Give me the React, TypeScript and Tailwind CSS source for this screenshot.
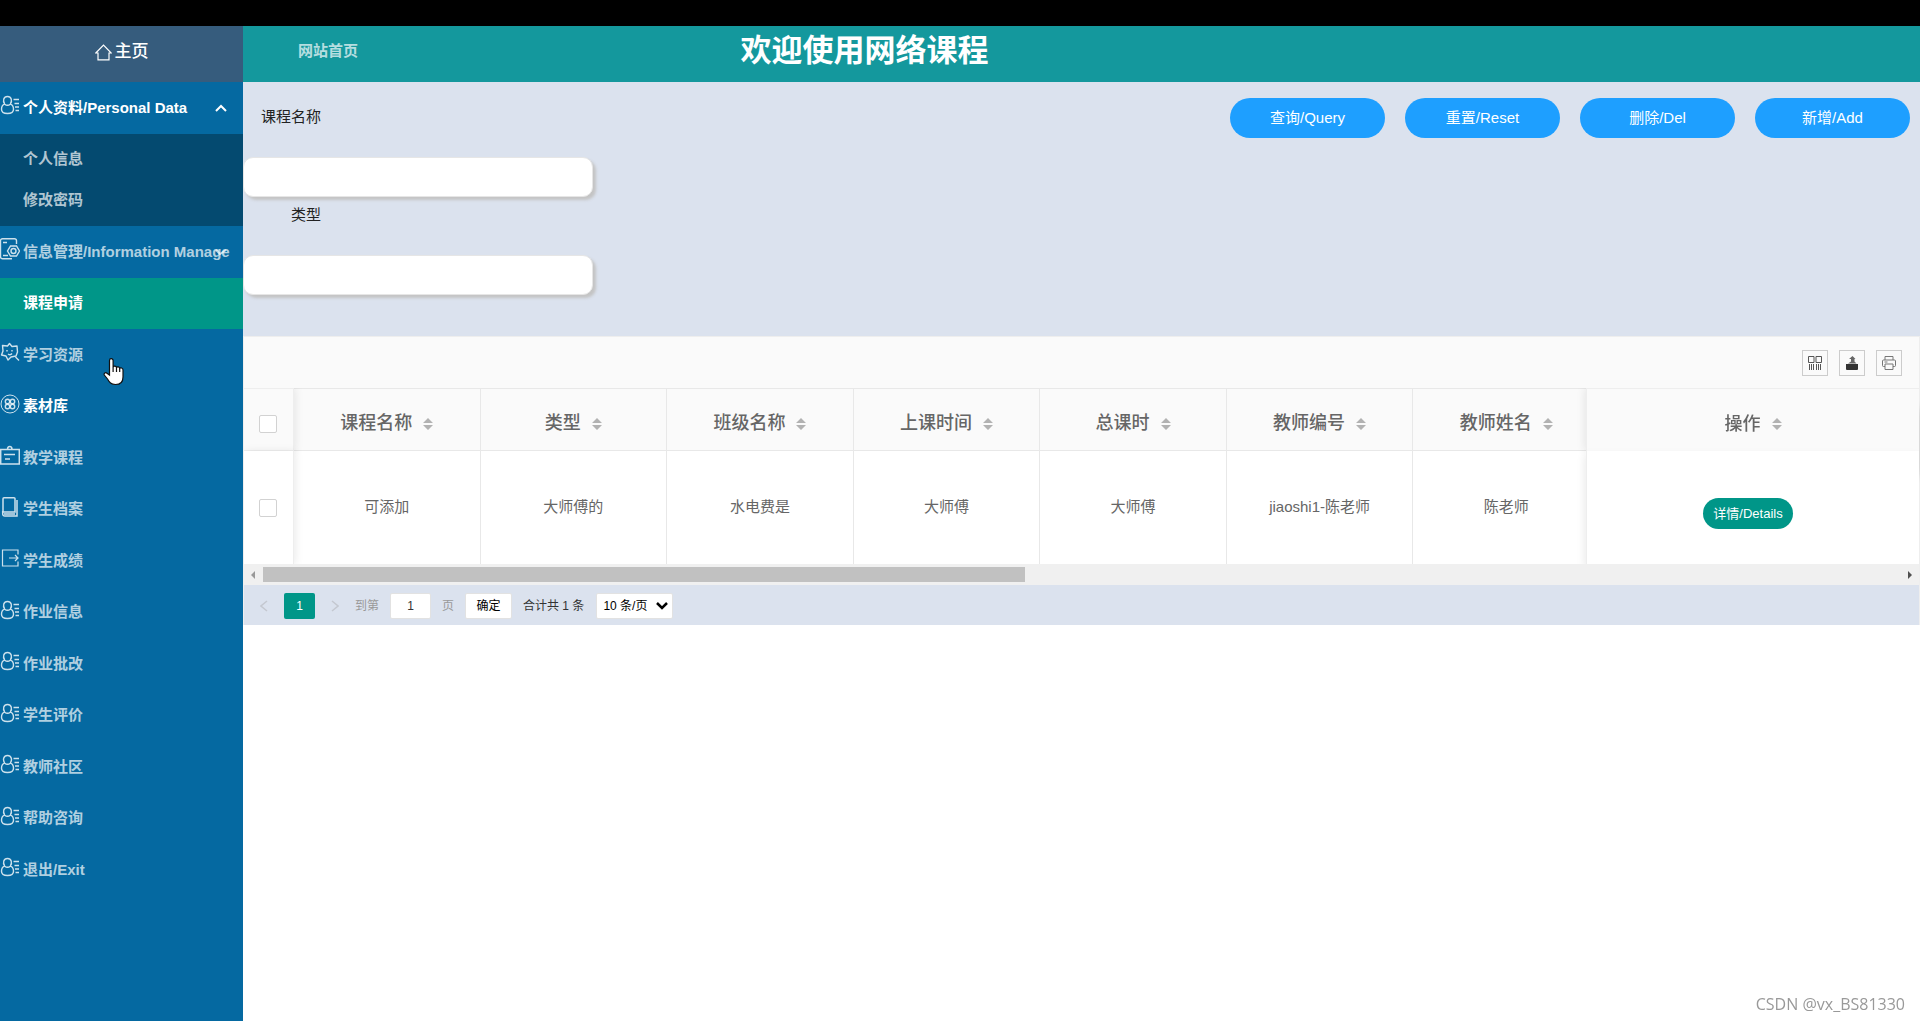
import type { ReactNode } from "react";

type IconProps = { children: ReactNode };

const Icon = ({ children }: IconProps) => (
  <svg width="20" height="20" viewBox="0 0 20 20" fill="none" stroke="currentColor" strokeWidth="1.4" className="shrink-0">
    {children}
  </svg>
);

const UserIcon = () => (
  <Icon>
    <path d="M4.7 9.2C2.4 5.6 3.6 1.5 7.5 1.5s5.1 4.1 2.8 7.7M4.7 9.2C2.3 10 1.5 11.8 1.5 14.2c0 3 1.5 4.3 6 4.3s6-1.300 6-4.300c0-2.400-.8-4.200-3.200-5M4.700 9.200c1.600 1.300 4 1.300 5.600 0" />
    <path d="M13.5 4.500H19M14.500 8.500H19M15 12H19M15.500 15.500H19" />
  </Icon>
);

const ManageIcon = () => (
  <svg width="20" height="22" viewBox="0 0 20 22" fill="none" stroke="currentColor" strokeWidth="1.4" className="shrink-0">
    <path d="M16.500 6V2.700a2 2 0 0 0-2-2h-12a2 2 0 0 0-2 2v16a2 2 0 0 0 2 2H12" />
    <path d="M3 4.500h4M3 17.500h5M10.500 8h6l3 5-3 5h-6l-3-5z" />
    <circle cx="13.500" cy="13" r="2.500" />
  </svg>
);

const StarIcon = () => (
  <Icon>
    <path d="M9.500 1.500l2.500 3 5-.5.500 6-1.500 4-5 1-3 3-2-4-4.500-1L3 9 2.500 3.500 7.500 4z" strokeLinejoin="round" />
    <path d="M7 8v1.500M12 8v1.500M8 12c1.500 1 3 .8 4-.5M15.500 15l3.500 3.500" />
  </Icon>
);

const CloverIcon = () => (
  <Icon>
    <circle cx="10" cy="10" r="9" strokeWidth="1" />
    <circle cx="7.500" cy="7.500" r="2.200" />
    <circle cx="12.500" cy="7.500" r="2.200" />
    <circle cx="7.500" cy="12.500" r="2.200" />
    <circle cx="12.500" cy="12.500" r="2.200" />
  </Icon>
);

const BoardIcon = () => (
  <Icon>
    <path d="M.7 4.500h18.600v14.500H.7zM7.500 4.500c0-4 4.500-4 4.500 0M4 9.500h11M5 14h5" strokeWidth="1.500" />
  </Icon>
);

const BookIcon = () => (
  <Icon>
    <path d="M4 .8h10a1 1 0 0 1 1 1V15H3V1.800a1 1 0 0 1 1-1zM2.700 14v3a2 2 0 0 0 2 2H17V3M4 17h11" strokeWidth="1.500" />
  </Icon>
);

const ExitIcon = () => (
  <Icon>
    <path d="M18 6.500V2H2.500v16H18v-4.500M9 10h8.500M15 7l3 3-3 3" strokeWidth="1.200" />
  </Icon>
);

const HomeIcon = () => (
  <svg width="17" height="17" viewBox="0 0 17 17" fill="none" stroke="currentColor" strokeWidth="1.2">
    <path d="M.8 9L8.500 1.200 16.200 9H14v6.800H3V9z" />
  </svg>
);

const menu = [
  { text: "学习资源", icon: <StarIcon /> },
  { text: "素材库", icon: <CloverIcon />, active: true },
  { text: "教学课程", icon: <BoardIcon /> },
  { text: "学生档案", icon: <BookIcon /> },
  { text: "学生成绩", icon: <ExitIcon /> },
  { text: "作业信息", icon: <UserIcon /> },
  { text: "作业批改", icon: <UserIcon /> },
  { text: "学生评价", icon: <UserIcon /> },
  { text: "教师社区", icon: <UserIcon /> },
  { text: "帮助咨询", icon: <UserIcon /> },
  { text: "退出/Exit", icon: <UserIcon /> },
];

const columns = [
  { title: "课程名称", value: "可添加" },
  { title: "类型", value: "大师傅的" },
  { title: "班级名称", value: "水电费是" },
  { title: "上课时间", value: "大师傅" },
  { title: "总课时", value: "大师傅" },
  { title: "教师编号", value: "jiaoshi1-陈老师" },
  { title: "教师姓名", value: "陈老师" },
];

const fields = [
  { id: "course", label: "课程名称" },
  { id: "type", label: "类型" },
];

const actions = ["查询/Query", "重置/Reset", "删除/Del", "新增/Add"];

const Sidebar = () => (
  <aside className="relative w-[243px] shrink-0 bg-[#0569a1] text-[15px] font-bold text-white/70">
    <a href="#" className="flex h-14 items-center justify-center gap-[3px] bg-[#365c7d] pb-1 text-[17px] font-medium text-white">
      <HomeIcon />
      主页
    </a>
    <nav>
      <a href="#" className="relative flex h-[52px] items-center gap-[3px] whitespace-nowrap text-white">
        <span className="pb-1.5 text-white/80"><UserIcon /></span>
        个人资料/Personal Data
        <svg width="12" height="8" viewBox="0 0 12 8" fill="none" stroke="currentColor" strokeWidth="2" className="absolute right-4">
          <path d="M1 7l5-5 5 5" />
        </svg>
      </a>
      <div className="bg-[#044a70] py-[5px]">
        <a href="#" className="flex h-[41px] items-center pl-[23px]">个人信息</a>
        <a href="#" className="flex h-[41px] items-center pl-[23px]">修改密码</a>
      </div>
      <a href="#" className="relative flex h-[52px] items-center gap-[3px] whitespace-nowrap">
        <span className="pb-1.5 text-white/80"><ManageIcon /></span>
        信息管理/Information Manage
        <svg width="12" height="6" viewBox="0 0 12 6" fill="none" stroke="currentColor" strokeWidth="2" className="absolute right-4">
          <path d="M1 1l4 4 6-4" />
        </svg>
      </a>
      <a href="#" className="flex h-[51px] items-center bg-[#009688] pl-[23px] text-white">课程申请</a>
      <div>
        {menu.map((m) => (
          <a
            key={m.text}
            href="#"
            className={`flex h-[51px] items-center gap-[3px] odd:h-[52px] ${m.active ? "text-white" : ""}`}
          >
            <span className="pb-1.5 text-white/80">{m.icon}</span>
            {m.text}
          </a>
        ))}
      </div>
    </nav>
    {/* hand pointer */}
    <svg width="22" height="28" viewBox="0 0 22 28" className="absolute top-[332px] left-[103px]">
      <path
        d="M6.500 17V2.500a1.800 1.800 0 0 1 3.600 0V9c.5-1.300 3.200-1.200 3.400.5.600-1 3-.8 3.200.8.700-.8 3.300-.5 3.300 1.600v7c0 5-2.500 7.600-7.500 7.600-4.500 0-6-2-8-5.500L1.300 17c-.8-1.800 1.400-3 2.700-1.800z"
        fill="#fff"
        stroke="#111"
        strokeWidth="1.200"
      />
      <path d="M10.100 9v5M13.500 9.500V14M16.700 10.500V14" stroke="#111" strokeWidth="1.200" />
    </svg>
  </aside>
);

const Filters = () => (
  <section className="flex justify-between bg-[#dbe2ee] pt-4 pr-2.5 pb-[42px]">
    <form className="text-[15px] text-[#222]">
      {fields.map((f) => (
        <div key={f.id} className="h-[98px]">
          <label htmlFor={f.id} className="block w-[78px] text-right leading-[38px]">{f.label}</label>
          <input
            id={f.id}
            className="mt-[21px] h-10 w-[350px] rounded-[10px] border border-[#e6e6e6] bg-white px-2 shadow-[3px_3px_3px_#c4c4c4] outline-none"
          />
        </div>
      ))}
    </form>
    <div className="flex gap-5">
      {actions.map((a) => (
        <button key={a} className="h-10 w-[155px] rounded-full bg-[#1e9fff] text-[15px] text-white">{a}</button>
      ))}
    </div>
  </section>
);

const Toolbar = () => (
  <div className="flex h-[52px] items-center justify-end gap-[11px] border-t border-[#eee] bg-[#fafafa] pr-[17px] text-[#555]">
    <button aria-label="筛选列" className="grid size-[26px] place-items-center border border-[#ccc]">
      <svg width="14" height="14" viewBox="0 0 14 14" fill="none" stroke="currentColor">
        <path d="M.5.5h5.500v6H.5zM8 .5h5.500v6H8zM1.500 8v6M3.500 8v6M5.500 8v6M8.500 8v6M10.500 8v6M12.500 8v6" />
      </svg>
    </button>
    <button aria-label="导出" className="grid size-[26px] place-items-center border border-[#ccc]">
      <svg width="14" height="14" viewBox="0 0 14 14" fill="#333">
        <path d="M1 8h12v5a1 1 0 0 1-1 1H2a1 1 0 0 1-1-1z" />
        <path d="M3 7.500h8.500L9.500 5.500V3H10.500L7.500 0 4 3h2v2.500z" fill="#666" />
      </svg>
    </button>
    <button aria-label="打印" className="grid size-[26px] place-items-center border border-[#ccc]">
      <svg width="14" height="14" viewBox="0 0 14 14" fill="none" stroke="#777">
        <path d="M3 4V.5h8V4M3 10.500H1.500a1 1 0 0 1-1-1V5a1 1 0 0 1 1-1h11a1 1 0 0 1 1 1v4.500a1 1 0 0 1-1 1H11M3 8h8v5.500H3zM2.500 6h3" />
      </svg>
    </button>
  </div>
);

const SortIcon = () => (
  <svg width="10" height="12" viewBox="0 0 10 12" fill="#b2b2b2">
    <path d="M5 0l5 5H0zM5 12L0 7h10z" />
  </svg>
);

const Check = ({ label }: { label: string }) => (
  <input
    type="checkbox"
    aria-label={label}
    className="block size-[18px] appearance-none rounded-xs border border-[#d2d2d2] bg-white checked:bg-[#009688]"
  />
);

const CourseTable = () => (
  <div className="overflow-hidden">
    <table className="w-[calc(100%+14px)] table-fixed border-separate border-spacing-0 text-[15px] text-[#666]">
      <thead>
        <tr className="h-[63px]">
          <th className="sticky left-0 z-10 w-[50px] border-y border-r border-[#eee] bg-[#fafafa] px-[15px] pt-2 shadow-[2px_0_8px_rgba(0,0,0,0.08)]">
            <Check label="全选" />
          </th>
          {columns.map((c) => (
            <th key={c.title} className="border-y border-r border-[#e8e8e8] bg-[#fafafa] pt-2 text-[18px] font-medium">
              <span className="flex items-center justify-center gap-[11px]">
                {c.title}
                <SortIcon />
              </span>
            </th>
          ))}
          <th className="sticky right-0 z-10 w-[333px] border-t border-l border-[#eee] bg-[#fafafa] pt-2 text-[18px] font-medium shadow-[-2px_0_8px_rgba(0,0,0,0.08)]">
            <span className="flex items-center justify-center gap-[11px]">
              操作
              <SortIcon />
            </span>
          </th>
        </tr>
      </thead>
      <tbody>
        <tr className="h-[113px] text-center">
          <td className="sticky left-0 z-10 border-r border-[#eee] bg-white px-[15px] shadow-[2px_0_8px_rgba(0,0,0,0.08)]">
            <Check label="选择" />
          </td>
          {columns.map((c) => (
            <td key={c.title} className="border-r border-[#e8e8e8]">{c.value}</td>
          ))}
          <td className="sticky right-0 z-10 border-l border-[#eee] bg-white pt-3 pr-2.5 shadow-[-2px_4px_8px_rgba(0,0,0,0.08)]">
            <button className="h-[31px] rounded-full bg-[#009688] px-2.5 text-[13px] text-white">详情/Details</button>
          </td>
        </tr>
      </tbody>
    </table>
    <div className="relative z-20 flex h-[21px] items-center justify-between bg-[#f0f0f0] px-[7px]">
      <div className="flex flex-1 items-center gap-2">
        <svg width="4" height="8" viewBox="0 0 4 8" fill="#999"><path d="M4 0v8L0 4z" /></svg>
        <div className="h-[15px] w-[46%] bg-[#c1c1c1]" />
      </div>
      <svg width="4" height="8" viewBox="0 0 4 8" fill="#505050"><path d="M0 0v8l4-4z" /></svg>
    </div>
  </div>
);

const Pager = () => (
  <div className="flex h-10 items-center bg-[#dbe2ee] pt-0.5 pl-4 text-xs text-[#333]">
    <button aria-label="上一页">
      <svg width="8" height="12" viewBox="0 0 8 12" fill="none" stroke="#c4c8d0" strokeWidth="1.5"><path d="M7 1L1 6l6 5" /></svg>
    </button>
    <button className="ml-4 h-[26px] w-[31px] rounded-xs bg-[#009688] text-white">1</button>
    <button aria-label="下一页" className="ml-4">
      <svg width="8" height="12" viewBox="0 0 8 12" fill="none" stroke="#c4c8d0" strokeWidth="1.5"><path d="M1 1l6 5-6 5" /></svg>
    </button>
    <label htmlFor="page" className="ml-4 text-[#999]">到第</label>
    <input id="page" defaultValue="1" className="mx-[11px] h-[26px] w-[41px] rounded-xs border border-[#e2e2e2] bg-white text-center" />
    <span className="text-[#999]">页</span>
    <button className="mx-[11px] h-[26px] w-[47px] rounded-xs border border-[#e2e2e2] bg-white text-black">确定</button>
    <span>合计共 1 条</span>
    <div className="relative ml-3">
      <select aria-label="每页条数" className="h-[26px] w-[77px] appearance-none rounded-xs border border-[#e2e2e2] bg-white pl-1.5 text-black">
        <option>10 条/页</option>
      </select>
      <svg width="12" height="8" viewBox="0 0 12 8" fill="none" stroke="#000" strokeWidth="2.5" className="pointer-events-none absolute top-[9px] right-[5px]">
        <path d="M1 1l5 5 5-5" />
      </svg>
    </div>
  </div>
);

const App = () => {
  return (
    <div className="flex min-h-screen flex-col bg-white font-['Liberation_Sans','Noto_Sans_CJK_SC',sans-serif]">
      <div className="h-[26px] bg-black" />
      <div className="flex flex-1">
        <Sidebar />
        <main className="min-w-0 flex-1">
          <header className="relative flex h-14 items-center bg-[#14989d] pb-1.5">
            <a href="#" className="pl-[55px] text-[15px] font-bold text-white/70">网站首页</a>
            <h1 className="absolute inset-x-0 pr-[434px] text-center text-[31px] leading-[50px] font-bold text-white">欢迎使用网络课程</h1>
          </header>
          <Filters />
          <div className="border-x border-[#eee]">
            <Toolbar />
            <CourseTable />
            <Pager />
          </div>
        </main>
      </div>
      <div className="fixed top-[408px] right-px flex h-[68px] w-2 flex-col overflow-hidden rounded-full shadow-[0_0_10px_rgba(0,0,0,0.2)]">
        <div className="h-[19px] bg-[#a9a9a9]" />
        <div className="flex-1 bg-linear-to-b from-[#22cc6c] from-60% to-[#7df08a]" />
      </div>
      <p className="fixed right-[15px] bottom-[5px] font-['Open_Sans',sans-serif] text-base text-[#999]">CSDN @vx_BS81330</p>
    </div>
  );
};

export default App;
